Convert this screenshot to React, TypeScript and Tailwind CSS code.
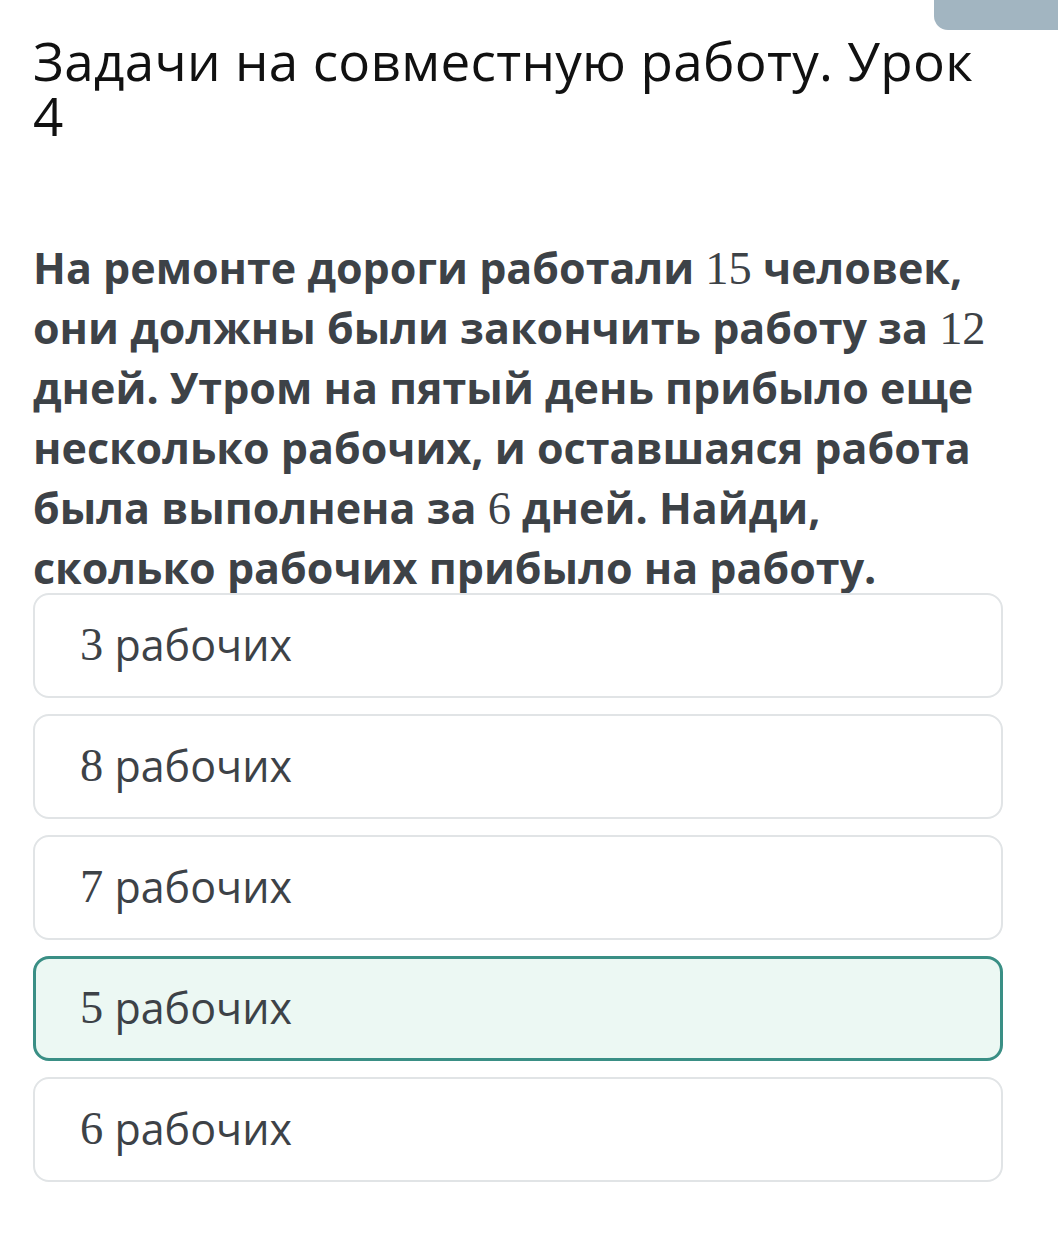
import React from "react";

const N = ({ children }: { children: React.ReactNode }) => (
  <span className="font-normal text-[1.08em] leading-none" style={{ fontFamily: '"Liberation Serif", "DejaVu Serif", serif' }}>
    {children}
  </span>
);

const options = [
  { n: "3", sel: false },
  { n: "8", sel: false },
  { n: "7", sel: false },
  { n: "5", sel: true },
  { n: "6", sel: false },
];

export default function App() {
  return (
    <div className="relative w-[1058px] h-[1234px] bg-white overflow-hidden" style={{ fontFamily: '"Open Sans", "Noto Sans", sans-serif' }}>
      <div className="absolute right-0 top-0 w-[124px] h-[30px] bg-[#a2b5c1] rounded-bl-[14px]" />
      <div className="px-[33px] pt-[33px]">
        <h1 className="text-[53px] leading-[55px] tracking-[0.3px] text-[#111] font-normal whitespace-nowrap">
          Задачи на совместную работу. Урок
          <br />4
        </h1>
        <p className="mt-[95px] text-[43px] leading-[60px] font-bold text-[#3d4247] whitespace-nowrap">
          На ремонте дороги работали <N>15</N> человек,
          <br />
          они должны были закончить работу за <N>12</N>
          <br />
          дней. Утром на пятый день прибыло еще
          <br />
          несколько рабочих, и оставшаяся работа
          <br />
          была выполнена за <N>6</N> дней. Найди,
          <br />
          сколько рабочих прибыло на работу.
        </p>
        <div className="-mt-[5px] flex flex-col gap-[16px] w-[970px]">
          {options.map((o) => (
            <div
              key={o.n}
              className={
                o.sel
                  ? "h-[105px] rounded-[16px] border-[3px] border-[#3a8f85] bg-[#ecf8f3] flex items-center pl-[44px] text-[43px] text-[#3d4247]"
                  : "h-[105px] rounded-[16px] border-2 border-[#e1e4e6] bg-white flex items-center pl-[45px] text-[43px] text-[#3d4247]"
              }
            >
              <N>{o.n}</N>
              <span>&nbsp;рабочих</span>
            </div>
          ))}
        </div>
      </div>
    </div>
  );
}
